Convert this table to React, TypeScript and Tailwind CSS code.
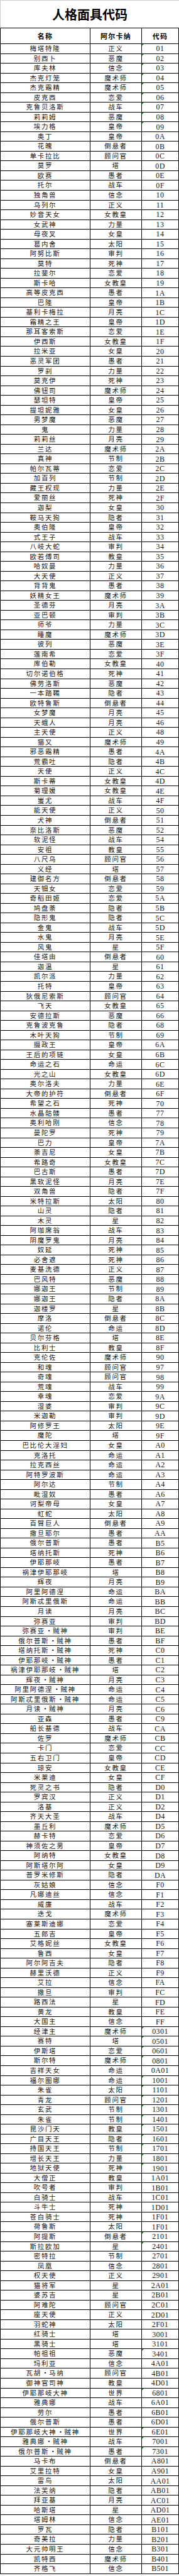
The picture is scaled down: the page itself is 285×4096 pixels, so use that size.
import React from 'react';

// 名称 阿尔卡纳 代码 — one row per line
const DATA = `
梅塔特隆 正义 01
别西卜 恶魔 02
库夫林 信念 03
杰克灯笼 魔术师 04
杰克霜精 魔术师 05
皮克西 恋爱 06
克鲁贝洛斯 战车 07
莉莉姆 恶魔 08
埃力格 皇帝 09
奥丁 皇帝 0A
花魄 倒悬者 0B
单卡拉比 顾问官 0C
莫罗 塔 0D
欧赛 愚者 0E
托尔 战车 0F
独角兽 信念 10
乌列尔 正义 11
妙音天女 女教皇 12
女武神 力量 13
母夜叉 女皇 14
葛内舍 太阳 15
阿努比斯 审判 16
莫特 死神 17
拉斐尔 恋爱 18
斯卡哈 女教皇 19
高等皮克西 愚者 1A
巴隆 皇帝 1B
基利卡梅拉 月亮 1C
霜精之王 皇帝 1D
那耳客索斯 恋爱 1E
伊西斯 女教皇 1F
拉米亚 女皇 20
恶灵军团 愚者 21
罗刹 力量 22
莫克伊 死神 23
佛钮司 魔术师 24
瑟坦特 皇帝 25
提坦妮雅 女皇 26
男梦魔 恶魔 27
鬼 力量 28
莉莉丝 月亮 29
兰达 魔术师 2A
真神 节制 2B
帕尔瓦蒂 恋爱 2C
加百列 节制 2D
藏王权现 力量 2E
爱丽丝 死神 2F
迦梨 女皇 30
鞍马天狗 隐者 31
奥伯隆 皇帝 32
式王子 战车 33
八岐大蛇 审判 34
欧若傅司 教皇 35
哈奴曼 力量 36
大天使 正义 37
背背鬼 愚者 38
妖精女王 魔术师 39
圣德芬 月亮 3A
亚巴顿 审判 3B
师爷 力量 3C
睡魔 魔术师 3D
彼列 恶魔 3E
莲南希 恋爱 3F
库伯勒 女教皇 40
切尔诺伯格 死神 41
佛劳洛斯 恶魔 42
一本踏鞴 隐者 43
欧特鲁斯 倒悬者 44
女梦魔 月亮 45
天蛾人 月亮 46
主天使 正义 48
猫又 魔术师 49
邪恶霜精 愚者 4A
荒霸吐 隐者 4B
天使 正义 4C
斯卡蒂 女教皇 4D
菊理媛 女教皇 4E
蚩尤 战车 4F
能天使 正义 50
犬神 倒悬者 51
奈比洛斯 恶魔 52
软泥怪 战车 54
安祖 教皇 55
八尺乌 顾问官 56
义经 塔 57
建御名方 倒悬者 58
天钿女 恋爱 59
奇稻田姬 恋爱 5A
鸠盘荼 隐者 5B
隐形鬼 隐者 5C
金鬼 战车 5D
水鬼 月亮 5E
风鬼 星 5F
佳塔由 倒悬者 60
迦温 星 61
凯尔派 力量 62
托特 皇帝 63
狄俄尼索斯 顾问官 64
飞天 女教皇 65
安德拉斯 恶魔 66
克鲁波克鲁 隐者 68
木叶天狗 节制 69
摄政王 皇帝 6A
王后的项链 女皇 6B
命运之石 命运 6C
光之山 女教皇 6D
奥尔洛夫 力量 6E
大帝的护符 倒悬者 6F
希望之石 死神 70
水晶骷髅 愚者 77
奥利哈刚 信念 78
曼陀罗 死神 79
巴力 皇帝 7A
荼吉尼 女皇 7B
希路奇 女教皇 7C
巴古斯 愚者 7D
黑软泥怪 月亮 7E
双角兽 隐者 7F
米特拉斯 太阳 80
山灵 隐者 81
木灵 星 82
阿珈席翁 战车 83
阴魔罗鬼 月亮 84
奴延 死神 85
必舍遮 死神 86
麦基洗德 正义 87
巴风特 恶魔 88
娜迦王 节制 89
娜迦王 隐者 8A
迦楼罗 星 8B
摩洛 倒悬者 8C
诺伦 命运 8D
贝尔芬格 塔 8E
比利士 教皇 8F
克伦佐 魔术师 90
和魂 顾问官 97
奇魂 顾问官 98
荒魂 战车 99
幸魂 恋爱 9A
湿婆 审判 9C
米迦勒 审判 9D
阿修罗王 太阳 9E
魔陀 塔 9F
巴比伦大淫妇 女皇 A0
克洛托 命运 A1
拉克西丝 命运 A2
阿特罗波斯 命运 A3
阿尔达 节制 A4
毗湿奴 愚者 A6
诃梨帝母 女皇 A7
虹蛇 太阳 A8
百臂巨人 倒悬者 A9
撒旦耶尔 愚者 AA
俄尔普斯 愚者 B5
塔纳托斯 死神 B6
伊耶那岐 愚者 B7
祸津伊耶那岐 塔 B8
辉夜 月亮 B9
阿里阿德涅 命运 BA
阿斯忒里俄斯 命运 BB
月读 月亮 BC
弥赛亚 审判 BD
弥赛亚·贼神 审判 BE
俄尔普斯·贼神 愚者 BF
塔纳托斯·贼神 死神 C0
伊耶那岐·贼神 愚者 C1
祸津伊耶那岐·贼神 塔 C2
辉夜·贼神 月亮 C3
阿里阿德涅·贼神 命运 C4
阿斯忒里俄斯·贼神 命运 C5
月读·贼神 月亮 C6
亚森 愚者 C9
船长基德 战车 CA
佐罗 魔术师 CB
卡门 恋爱 CC
五右卫门 皇帝 CD
琼安 女教皇 CE
米莱迪 女皇 CF
死灵之书 隐者 D0
罗宾汉 正义 D1
洛基 正义 D2
齐天大圣 战车 D4
墨丘利 魔术师 D5
赫卡特 恋爱 D6
神须佐之男 皇帝 D7
阿纳特 女教皇 D8
阿斯塔尔阿 女皇 D9
普罗米修斯 隐者 DA
灰姑娘 信念 F0
凡娜迪丝 信念 F1
威廉 战车 F2
迭戈 魔术师 F3
塞莱斯迪娜 恋爱 F4
五郎吉 皇帝 F5
艾格妮丝 女教皇 F6
鲁西 女皇 F7
阿尔阿吉夫 隐者 F8
赫里沃德 正义 F9
艾拉 信念 FA
撒旦 审判 FC
路西法 星 FD
黄龙 教皇 FE
大国主 信念 FF
经津主 魔术师 0301
赛特 塔 0501
伊斯塔 恋爱 0601
斯尔特 魔术师 0801
吉祥天女 命运 0A01
福尔图娜 命运 1001
朱雀 太阳 1101
青龙 顾问官 1201
玄武 节制 1301
朱雀 节制 1401
昆沙门天 教皇 1501
广目天王 隐者 1601
持国天王 节制 1701
增长天王 力量 1801
地狱天使 死神 1901
大僧正 教皇 1A01
吹号者 审判 1B01
白骑士 战车 1C01
斗牛士 死神 1D01
苍白骑士 死神 1F01
荷鲁斯 太阳 1F01
阿提斯 倒悬者 2101
斯拉欧加 星 2401
密特拉 节制 2701
凤凰 信念 2801
权天使 正义 2901
猫将军 星 2A01
婆苏吉 星 2B01
阿难陀 顾问官 2C01
座天使 正义 2D01
羽蛇神 太阳 2F01
红骑士 塔 3001
黑骑士 塔 3101
帕祖祖 恶魔 3401
玛利亚 信念 4A01
瓦胡·马纳 顾问官 4B01
御神官司神 教皇 4D01
伊耶那岐大神 世界 6801
雅典娜 战车 6A01
劳尔 愚者 6B01
俄尔普斯 愚者 6D01
伊耶那岐大神·贼神 世界 6E01
雅典娜·贼神 战车 7001
俄尔普斯·贼神 愚者 7301
马卡布 倒悬者 A801
艾里拉特 女皇 A901
雷鸟 太阳 AA01
法芙纳 隐者 AB01
拜亚基 月亮 AC01
哈斯塔 星 AD01
塔姆林 信念 AE01
罗瓦 隐者 B101
奇美拉 力量 B201
大元帅明王 信念 B301
凯特西 魔术师 B401
齐格飞 信念 B501
`;

const rows = DATA.trim()
    .split('\n')
    .map((line) => line.trim().split(/\s+/));

// cells with the little green "number stored as text" marker
const flagged = new Set([
    '01', '02', '03', '04', '05', '06', '07', '08', '09',
    '0301', '0501', '0601', '0801', '1001', '1101', '1201', '1301', '1401', '1501',
    '1601', '1701', '1801', '1901', '2101', '2401', '3401', '6801', '6E01', '7001', '7301',
]);

function Name({ text }: { text: string }) {
    const parts = text.split('·');
    return (
        <span className="whitespace-nowrap">
            {parts.map((p, i) => (
                <React.Fragment key={i}>
                    {i > 0 && <span className="inline-block w-[12.2px] text-center tracking-normal">·</span>}
                    {p}
                </React.Fragment>
            ))}
        </span>
    );
}

export default function App() {
    return (
        <div className="w-[285px] bg-white text-[#151515]">
            <div className="h-[44px] flex items-center justify-center border-l border-t border-[#c6cdd5]">
                <h1 className="text-[20px] font-bold leading-none font-['Noto_Sans_CJK_SC',sans-serif] text-black">
                    人格面具代码
                </h1>
            </div>

            <div className="border-l border-r border-t border-black">
                <div className="grid grid-cols-[143px_82px_1fr] h-[25px] border-b border-black font-bold text-[11px] tracking-[1.2px] font-['Noto_Sans_CJK_SC',sans-serif] text-black">
                    <div className="flex items-center justify-center border-r border-black">名称</div>
                    <div className="flex items-center justify-center border-r border-black">阿尔卡纳</div>
                    <div className="flex items-center justify-center">代码</div>
                </div>

                {rows.map(([name, arcana, code], i) => (
                    <div
                        key={i}
                        className="grid grid-cols-[143px_82px_1fr] h-[15.544px] border-b border-black leading-none"
                    >
                        <div className="flex items-center justify-center border-r border-black text-[10.5px] tracking-[1.7px] font-['Noto_Sans_CJK_SC',sans-serif]">
                            <Name text={name} />
                        </div>
                        <div className="flex items-center justify-center border-r border-black text-[10.5px] tracking-[1.7px] font-['Noto_Sans_CJK_SC',sans-serif]">
                            {arcana}
                        </div>
                        <div className="relative flex items-center justify-center text-[12px] tracking-[0.4px] font-['Liberation_Serif',serif]">
                            {flagged.has(code) && (
                                <span className="absolute left-0 top-0 w-0 h-0 border-t-[3px] border-r-[3px] border-t-[#2f8a2f] border-r-transparent" />
                            )}
                            {code}
                        </div>
                    </div>
                ))}
            </div>
        </div>
    );
}
